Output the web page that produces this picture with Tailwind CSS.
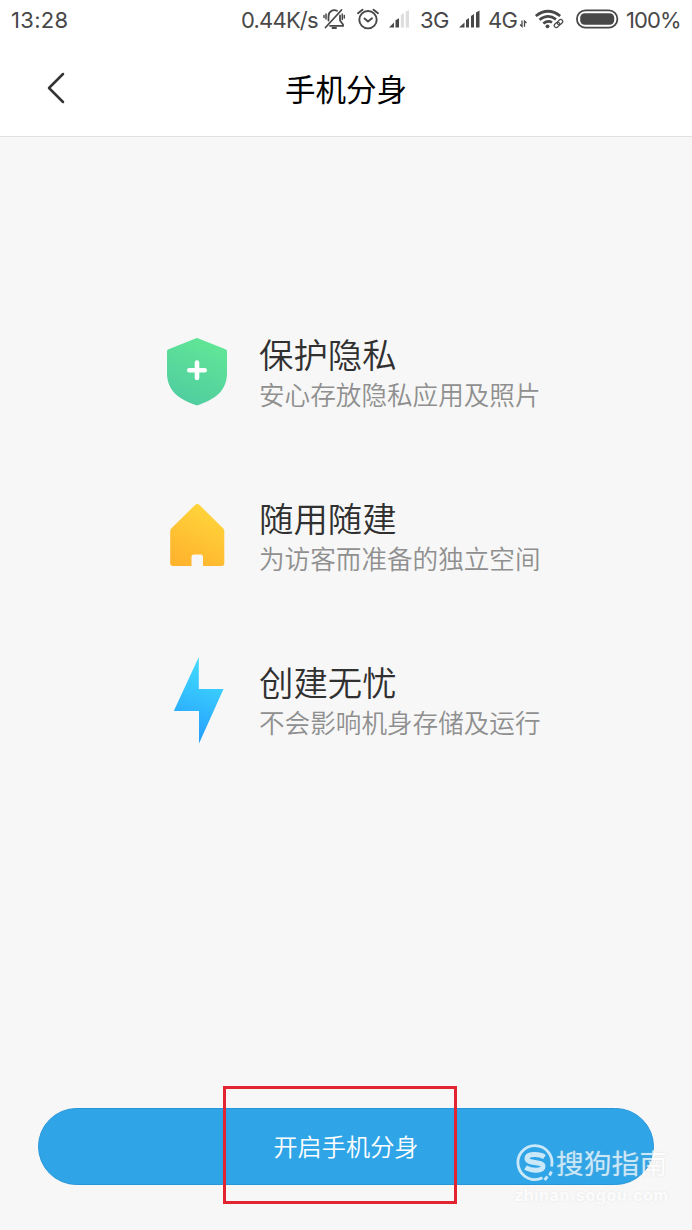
<!DOCTYPE html>
<html lang="zh-CN">
<head>
<meta charset="utf-8">
<title>手机分身</title>
<script src="https://cdn.jsdelivr.net/npm/@tailwindcss/browser@4"></script>
</head>
<body class="relative flex h-[1230px] w-[692px] flex-col overflow-hidden bg-[#f7f7f7] font-['Noto_Sans_CJK_SC',sans-serif]">
<header class="h-[137px] shrink-0 border-b border-[#e2e2e2] bg-white">
  <div class="flex h-10 items-center whitespace-nowrap pl-[11px] font-['Inter',sans-serif] text-[22px] leading-10 text-[#484848]">
    <span class="w-[230px] tracking-[0.3px]">13:28</span>
    <span class="w-[81px] tracking-[-0.8px]">0.44K/s</span>
    <svg class="mr-[9px] h-10 w-[25px] shrink-0" viewBox="323 0 25 40" fill="none" stroke="#484848" stroke-width="1.8" stroke-linecap="round">
      <path d="M338 10.800C334 8.800 329.500 11.500 329.500 16.500V20.500M341 15.500V20.500L344 24.500V25.800H331M326.500 27.500 342.500 10"/><path d="M333.500 28H337" stroke-width="2"/><path d="M327 14V19M325 15.500V17.500M343.300 14V19.500M345.300 15.500V18" stroke-width="1.500"/>
    </svg>
    <svg class="mr-[8px] h-10 w-[24px] shrink-0" viewBox="356 0 24 40" fill="none" stroke="#484848" stroke-width="1.9" stroke-linecap="round">
      <circle cx="368" cy="19.700" r="8.700"/><path d="M364.500 18.500 368 21.500 372 18.300M358 13.200 362.500 9.700M373.500 9.700 378 13.200"/>
    </svg>
    <svg class="mr-[10px] h-10 w-[22px] shrink-0" viewBox="388 0 22 40">
      <path fill="#484848" d="M389 27.500 394 22.500V27.500ZM395.500 20.300 399 18.300V27.500H395.500Z"/><path fill="#dedede" d="M400.800 15 404 13V27.500H400.800ZM405.700 11.800 409 10V27.500H405.700Z"/>
    </svg>
    <span class="w-[39px] tracking-[-0.7px]">3G</span>
    <svg class="mr-[7px] h-10 w-[22px] shrink-0" viewBox="459 0 22 40"><path fill="#484848" d="M459 27.500 464.500 22.500V27.500ZM466 20 469 18V27.500H466ZM471 16 474 14V27.500H471ZM476 12.500 479.500 10.500V27.500H476Z"/></svg>
    <span class="w-[30px] tracking-[-0.7px]">4G</span>
    <svg class="mr-[6px] h-10 w-[10px] shrink-0" viewBox="518 0 10 40" fill="none" stroke="#484848" stroke-width="1.300"><path d="M522 20.500V26.500L520 24.500M524.500 26.800V21L526.500 23"/></svg>
    <svg class="mr-[11px] h-10 w-[31px] shrink-0" viewBox="534 0 31 40" fill="none" stroke="#484848" stroke-width="2.700">
      <path d="M535.800 16Q548 6.500 560.200 16M539.500 19.800Q548 13.300 556 19.300M543.300 23.500Q548 19.800 552 22.500"/><circle cx="547.500" cy="26.300" r="1.900" fill="#484848" stroke="none"/>
      <g stroke-width="1.200" transform="rotate(-42 558.500 23.500)"><rect x="553.500" y="21.500" width="6" height="4" rx="2"/><rect x="557.500" y="21.500" width="6" height="4" rx="2"/></g>
    </svg>
    <svg class="mr-[7px] h-10 w-[43px] shrink-0" viewBox="576 0 43 40"><rect x="576.900" y="10.400" width="40.500" height="17.200" rx="8.600" fill="none" stroke="#484848" stroke-width="1.800"/><rect x="580.200" y="13.300" width="34" height="11.500" rx="4.500" fill="#484848"/></svg>
    <span class="tracking-[-0.9px]">100%</span>
  </div>
  <div class="grid h-24 grid-cols-[80px_1fr_80px] items-center">
    <svg class="ml-[44px] h-[36px] w-6" viewBox="44 70 24 36" fill="none" stroke="#333" stroke-width="2.500" stroke-linecap="round" stroke-linejoin="round"><path d="M63 74 49 88 63 102"/></svg>
    <h1 class="pb-[1px] text-center text-[30.500px] leading-[40px] text-black">手机分身</h1>
  </div>
</header>
<main class="mt-[187px] flex flex-col pl-[165px]">
  <section class="flex h-[164px]">
    <svg class="mt-[12px] h-[72px] w-16 shrink-0" viewBox="165 336 64 72">
      <defs><linearGradient id="green" x1=".7" y1="0" x2=".3" y2="1"><stop stop-color="#61e796"/><stop offset="1" stop-color="#50cca0"/></linearGradient></defs>
      <path fill="url(#green)" d="M195.500 338.400Q197 337.800 198.500 338.400L225.500 349.200Q227 349.800 227 351.500V373C227 390 216 399 198.500 405Q197 405.500 195.500 405C178 399 167 390 167 373V351.500Q167 349.800 168.500 349.200Z"/><path d="M197 362.500V378M189.300 370.300H204.700" stroke="#fff" stroke-width="4.600" stroke-linecap="round"/>
    </svg>
    <div class="ml-[30px] mt-[5px]"><h2 class="text-[34.400px] font-[350] leading-[48px] text-[#303030]">保护隐私</h2><p class="mt-px text-[25.600px] font-[350] leading-[32px] text-[#8f8f8f]">安心存放隐私应用及照片</p></div>
  </section>
  <section class="flex h-[164px]">
    <svg class="mt-[12px] h-[72px] w-16 shrink-0" viewBox="165 500 64 72">
      <defs><linearGradient id="gold" x1=".7" y1="0" x2=".25" y2="1"><stop stop-color="#ffd63b"/><stop offset="1" stop-color="#ffb32d"/></linearGradient></defs>
      <path fill="url(#gold)" d="M195.300 504.800Q197.300 503 199.300 504.800L223.300 528.500Q224.300 529.500 224.300 531V563.300Q224.300 566 221.500 566H203V557Q203 554.500 200.500 554.500H194Q191.500 554.500 191.500 557V566H173Q170.200 566 170.200 563.300V531Q170.200 529.500 171.200 528.500Z"/>
    </svg>
    <div class="ml-[30px] mt-[5px]"><h2 class="text-[34.400px] font-[350] leading-[48px] text-[#303030]">随用随建</h2><p class="mt-px text-[25.600px] font-[350] leading-[32px] text-[#8f8f8f]">为访客而准备的独立空间</p></div>
  </section>
  <section class="flex h-[164px]">
    <svg class="mt-[4px] h-[92px] w-16 shrink-0" viewBox="165 656 64 92">
      <defs><linearGradient id="blue" x1=".6" y1="0" x2=".4" y2="1"><stop stop-color="#42dcff"/><stop offset=".3" stop-color="#39ccfd"/><stop offset="1" stop-color="#239cff"/></linearGradient></defs>
      <path fill="url(#blue)" d="M198.800 657V689H223.500L199 743.500V711H173.800Z"/>
    </svg>
    <div class="ml-[30px] mt-[5px]"><h2 class="text-[34.400px] font-[350] leading-[48px] text-[#303030]">创建无忧</h2><p class="mt-px text-[25.600px] font-[350] leading-[32px] text-[#8f8f8f]">不会影响机身存储及运行</p></div>
  </section>
</main>
<button class="mx-[38px] mb-[45px] mt-auto h-[77px] shrink-0 rounded-full border border-[#2796d9] bg-[#2fa5e7] pb-[2px] text-[24.200px] font-[350] leading-[36px] text-white">开启手机分身</button>
<div class="absolute left-[223px] top-[1086px] h-[118px] w-[234px] border-[3px] border-[#e32431]"></div>
<div class="absolute left-[514px] top-[1141px] w-[160px] text-white">
  <div class="flex h-[44px] items-center opacity-75">
    <svg class="h-[42px] w-10 shrink-0" viewBox="514 1142 40 42" fill="none" stroke="#fff"><path d="M542.500 1177.800A17 17 0 1 1 551.500 1166.500" stroke-width="2.800"/><path d="M544.500 1157C539 1153.500 527 1153.500 527 1158.500C527 1164 543 1161 543 1166.500C543 1171.500 531 1171 525.500 1167.500" stroke-width="5"/><path d="M551.500 1171.500 549.500 1175.500M547.500 1176.500 544.500 1180" stroke-width="2.800"/></svg>
    <span class="ml-[2px] whitespace-nowrap pb-[3px] text-[27.800px] leading-10 [text-shadow:0_0_2px_#bbbbbb80]">搜狗指南</span>
  </div>
  <div class="whitespace-nowrap font-['Inter',sans-serif] text-[16px] font-bold leading-5 tracking-[0.550px] opacity-70 [text-shadow:0_0_2px_#bbbbbb60]">zhinan.sogou.com</div>
</div>
</body>
</html>
